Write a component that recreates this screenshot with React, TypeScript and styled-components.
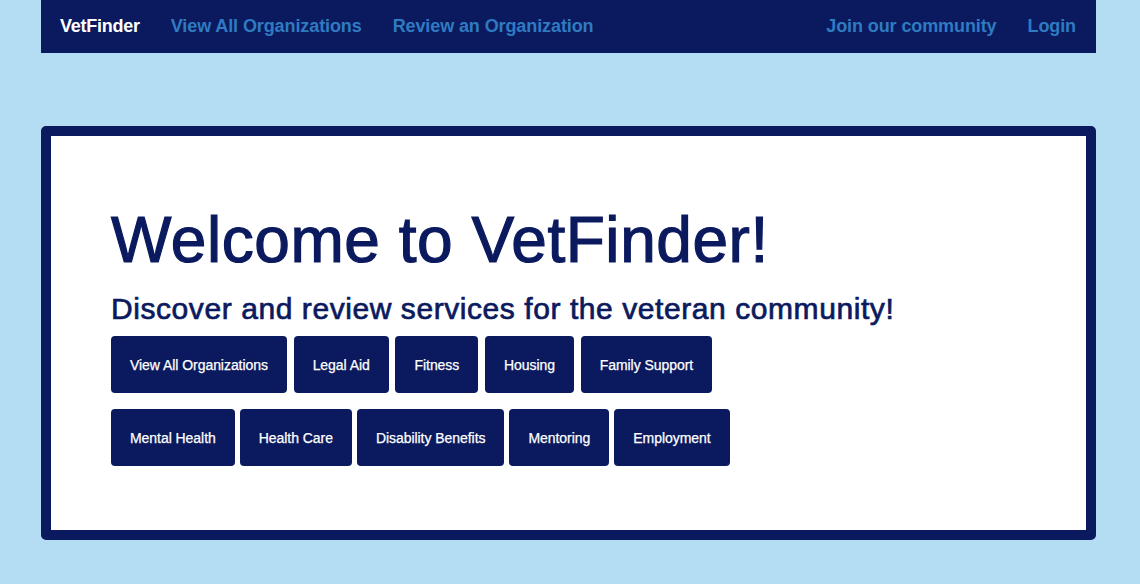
import React from "react";
import styled, { createGlobalStyle } from "styled-components";

const NAVY = "#0b1a5e";
const SKY = "#b4ddf3";
const LINK = "#2f7bc2";

const Global = createGlobalStyle`
  html, body { margin: 0; padding: 0; background: ${SKY}; }
  body { font-family: "Liberation Sans", Arial, Helvetica, sans-serif; }
  * { box-sizing: border-box; }
`;

const Page = styled.div`
  width: 1055px;
  margin-left: 41px;
  min-height: 584px;
`;

const NavBar = styled.nav`
  height: 53px;
  background: ${NAVY};
  display: flex;
  align-items: center;
  padding: 0 20px 0 19px;
`;

const NavGroup = styled.div`
  display: flex;
  align-items: center;
  gap: 31px;
`;

const Spacer = styled.div`
  flex: 1;
`;

const Brand = styled.a`
  color: #ffffff;
  font-weight: 700;
  font-size: 18px;
  letter-spacing: -0.25px;
  text-decoration: none;
`;

const NavLink = styled.a`
  color: ${LINK};
  font-weight: 700;
  font-size: 18px;
  letter-spacing: -0.1px;
  text-decoration: none;
`;

const Card = styled.section`
  margin-top: 73px;
  background: #ffffff;
  border: 10px solid ${NAVY};
  border-radius: 5px;
  padding: 66px 60px 64px 60px;
`;

const Title = styled.h1`
  margin: 0;
  color: ${NAVY};
  font-size: 64px;
  font-weight: 400;
  line-height: 76px;
  letter-spacing: 0.55px;
  -webkit-text-stroke: 1.2px ${NAVY};
`;

const Subtitle = styled.h2`
  margin: 13px 0 9px;
  color: ${NAVY};
  font-size: 30px;
  font-weight: 400;
  line-height: 36px;
  letter-spacing: 0.57px;
  -webkit-text-stroke: 0.7px ${NAVY};
`;

const Rows = styled.div`
  display: flex;
  flex-direction: column;
  gap: 16px;
`;

const Row = styled.div<{ $gap: number }>`
  display: flex;
  gap: ${(p) => p.$gap}px;
`;

const CategoryButton = styled.button`
  height: 57px;
  padding: 0 19px;
  background: ${NAVY};
  color: #ffffff;
  border: none;
  border-radius: 4px;
  font-family: "Liberation Sans", Arial, Helvetica, sans-serif;
  font-size: 14px;
  letter-spacing: -0.05px;
  -webkit-text-stroke: 0.25px #ffffff;
  cursor: pointer;
`;

const rows = [
  { gap: 6.7, items: ["View All Organizations", "Legal Aid", "Fitness", "Housing", "Family Support"] },
  { gap: 5, items: ["Mental Health", "Health Care", "Disability Benefits", "Mentoring", "Employment"] },
];

export default function App() {
  return (
    <>
      <Global />
      <Page>
        <NavBar>
          <NavGroup>
            <Brand href="#">VetFinder</Brand>
            <NavLink href="#">View All Organizations</NavLink>
            <NavLink href="#">Review an Organization</NavLink>
          </NavGroup>
          <Spacer />
          <NavGroup>
            <NavLink href="#">Join our community</NavLink>
            <NavLink href="#">Login</NavLink>
          </NavGroup>
        </NavBar>
        <Card>
          <Title>Welcome to VetFinder!</Title>
          <Subtitle>Discover and review services for the veteran community!</Subtitle>
          <Rows>
            {rows.map((r, i) => (
              <Row key={i} $gap={r.gap}>
                {r.items.map((label) => (
                  <CategoryButton key={label}>{label}</CategoryButton>
                ))}
              </Row>
            ))}
          </Rows>
        </Card>
      </Page>
    </>
  );
}
